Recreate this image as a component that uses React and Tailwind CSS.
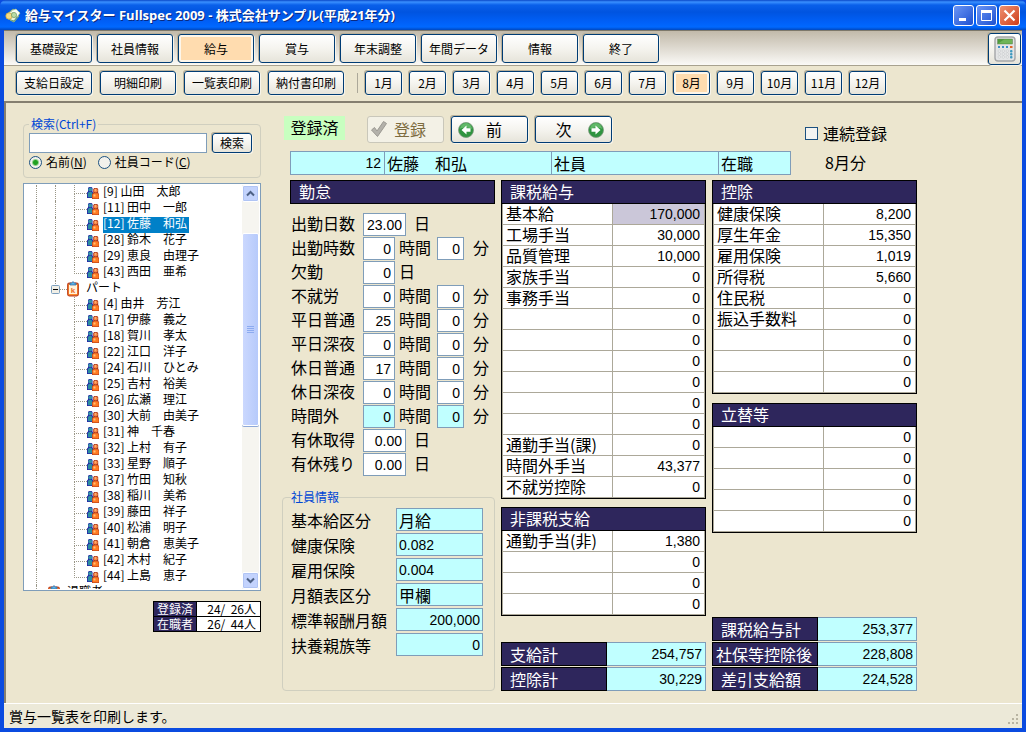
import { useState } from "react"
import clsx from "clsx"

const MENU = ["基礎設定", "社員情報", "給与", "賞与", "年末調整", "年間データ", "情報", "終了"]
const SUB_MENU = ["支給日設定", "明細印刷", "一覧表印刷", "納付書印刷"]
const MONTHS = [1, 2, 3, 4, 5, 6, 7, 8, 9, 10, 11, 12]

const SHAIN = [
  [9, "山田　太郎"],
  [11, "田中　一郎"],
  [12, "佐藤　和弘"],
  [28, "鈴木　花子"],
  [29, "恵良　由理子"],
  [43, "西田　亜希"],
]

const PART = [
  [4, "由井　芳江"],
  [17, "伊藤　義之"],
  [18, "賀川　孝太"],
  [22, "江口　洋子"],
  [24, "石川　ひとみ"],
  [25, "吉村　裕美"],
  [26, "広瀬　理江"],
  [30, "大前　由美子"],
  [31, "神　千春"],
  [32, "上村　有子"],
  [33, "星野　順子"],
  [37, "竹田　知秋"],
  [38, "稲川　美希"],
  [39, "藤田　祥子"],
  [40, "松浦　明子"],
  [41, "朝倉　恵美子"],
  [42, "木村　紀子"],
  [44, "上島　恵子"],
]

// h = 時間, m = 分, d = 日
const KINTAI = [
  { label: "出勤日数", d: "23.00", wide: true },
  { label: "出勤時数", h: "0", m: "0" },
  { label: "欠勤", d: "0" },
  { label: "不就労", h: "0", m: "0" },
  { label: "平日普通", h: "25", m: "0" },
  { label: "平日深夜", h: "0", m: "0" },
  { label: "休日普通", h: "17", m: "0" },
  { label: "休日深夜", h: "0", m: "0" },
  { label: "時間外", h: "0", m: "0", auto: true },
  { label: "有休取得", d: "0.00", wide: true },
  { label: "有休残り", d: "0.00", wide: true },
]

const KAZEI = [
  ["基本給", "170,000"],
  ["工場手当", "30,000"],
  ["品質管理", "10,000"],
  ["家族手当", "0"],
  ["事務手当", "0"],
  ["", "0"],
  ["", "0"],
  ["", "0"],
  ["", "0"],
  ["", "0"],
  ["", "0"],
  ["通勤手当(課)", "0"],
  ["時間外手当", "43,377"],
  ["不就労控除", "0"],
]

const HIKAZEI = [
  ["通勤手当(非)", "1,380"],
  ["", "0"],
  ["", "0"],
  ["", "0"],
]

const KOUJO = [
  ["健康保険", "8,200"],
  ["厚生年金", "15,350"],
  ["雇用保険", "1,019"],
  ["所得税", "5,660"],
  ["住民税", "0"],
  ["振込手数料", "0"],
  ["", "0"],
  ["", "0"],
  ["", "0"],
]

const TATEKAE = [
  ["", "0"],
  ["", "0"],
  ["", "0"],
  ["", "0"],
  ["", "0"],
]

const INFO = [
  ["基本給区分", "月給", "text"],
  ["健康保険", "0.082", "rate"],
  ["雇用保険", "0.004", "rate"],
  ["月額表区分", "甲欄", "text"],
  ["標準報酬月額", "200,000", "num"],
  ["扶養親族等", "0", "num"],
]

const NUM = "font-['Liberation_Sans',sans-serif] text-[14px]"

function AppIcon() {
  return (
    <svg className="h-4 w-4 shrink-0" viewBox="0 0 16 16">
      <path d="M1 8 8 2l7 4-6 8-6-2z" fill="#e9f3d8" stroke="#6f9a62" strokeWidth=".8" />
      <path d="m6 4 5-2 4 4-3 4z" fill="#fbfdf4" stroke="#a9c493" strokeWidth=".6" />
      <circle cx="4" cy="9" r="3.2" fill="#f6dc83" stroke="#c79f3f" strokeWidth=".7" />
      <circle cx="9" cy="8" r="2.6" fill="#b9dca6" stroke="#6f9a62" strokeWidth=".7" />
      <path d="m5 13 4 2 5-6" fill="none" stroke="#8fb57e" />
    </svg>
  )
}

function CalcIcon() {
  return (
    <svg className="h-[26px] w-[22px]" viewBox="0 0 22 26">
      <rect x="1" y="1" width="20" height="24" rx="3" fill="#e4e5e6" stroke="#a4a6a8" strokeWidth="1.4" />
      <rect x="3.5" y="3" width="15" height="5" fill="#4f9a3c" stroke="#6d8a62" strokeWidth=".5" />
      <path d="M4 7.5 10 3.5h8v4z" fill="#6fb457" />
      {[4, 8, 12].map((x) => (
        <rect key={x} x={x} y="10" width="2" height="2" fill="#3f8fc4" />
      ))}
      <rect x="16" y="10" width="2.5" height="2" fill="#e0672c" />
      {[14, 17, 20].map((y) => (
        <g key={y}>
          <rect x="4" y={y} width="2.5" height="2" rx="1" fill="#fafafa" stroke="#b5b7b9" strokeWidth=".5" />
          <rect x="8" y={y} width="2.5" height="2" rx="1" fill="#fafafa" stroke="#b5b7b9" strokeWidth=".5" />
          <rect x="12" y={y} width="2.5" height="2" rx="1" fill="#fafafa" stroke="#b5b7b9" strokeWidth=".5" />
          <rect x="16" y={y} width="2.5" height="2.5" rx="1" fill="#3f9ac0" />
        </g>
      ))}
    </svg>
  )
}

function PeopleIcon() {
  return (
    <svg className="mt-[2px] h-3 w-3 shrink-0" viewBox="0 0 12 12">
      <path d="M0 11V5.500l1-1V1l1-1h2.500l1 1v3.500L6 5.500V11z" fill="#2424a8" />
      <path d="M.8 10.200V6L2 5h2.500l1 1v4.200z" fill="#2d8fa0" />
      <circle cx="3.2" cy="2.6" r="2" fill="#3593a6" />
      <path d="M5 12V7l1.200-1V2.200l1-1.200h3l1 1.200V6l.8 1v5z" fill="#a8321c" />
      <path d="M5.500 11.500V7.500L7 6.300h3.500l1.200 1.200v4z" fill="#ff7a22" />
      <path d="M6.500 7.500h2v2h-2z" fill="#ffc07a" />
      <circle cx="8.7" cy="3.600" r="2" fill="#f58a48" />
      <path d="M8 2.500h1v1H8z" fill="#ffcfa4" />
    </svg>
  )
}

function ClipIcon() {
  return (
    <svg className="h-4 w-3 shrink-0" viewBox="0 0 12 16">
      <rect x=".7" y="2.2" width="10.6" height="12.6" rx="1.5" fill="#ff8a2a" stroke="#c0401c" strokeWidth="1.2" />
      <rect x="2" y="4" width="8" height="9" fill="#fff3dc" />
      <path d="M3 4V2h1.5L6 .6 7.5 2H9v2z" fill="#58b4e8" stroke="#2a5f9c" strokeWidth=".7" />
      <text x="6" y="11.5" textAnchor="middle" fontSize="8" fontWeight="bold" fill="#ee6a1c" fontFamily="Liberation Sans">
        k
      </text>
    </svg>
  )
}

function CheckIcon() {
  return (
    <svg className="h-[18px] w-[18px] shrink-0" viewBox="0 0 18 18">
      <path d="m1.5 10 3-2.5L7 11l6.500-9.500 3 2L7.500 16.500z" fill="#b3b1aa" stroke="#9b9992" strokeWidth="1" strokeLinejoin="round" />
    </svg>
  )
}

function ArrowIcon({ right }) {
  return (
    <svg className="h-4 w-4 shrink-0" viewBox="0 0 16 16">
      <circle cx="8" cy="8" r="7.500" fill="#2f9440" stroke="#7f9a80" strokeWidth=".8" />
      <path d="M2 7a6 6 0 0 1 12 0c-3-2-9-2-12 0z" fill="#62b869" />
      <path d={right ? "M3.500 6.300h4V3.500L12.500 8l-5 4.500V9.700h-4z" : "M12.500 6.300h-4V3.500L3.500 8l5 4.500V9.700h4z"} fill="#fff" />
    </svg>
  )
}

function ToolButton({ children, active, className, ...rest }) {
  return (
    <button
      type="button"
      className={clsx(
        "flex shrink-0 items-center justify-center rounded-[3px] border border-[#003c74] text-[12px] leading-4 whitespace-nowrap",
        active
          ? "bg-[#ffdcaf] shadow-[inset_0_0_0_2px_#fdf6ea,1px_1px_0_#f7f4ea,-1px_-1px_0_#b9b09a]"
          : "bg-linear-to-b from-white via-[#f5f4ef] to-[#e6e4da] shadow-[1px_1px_0_#f7f4ea,-1px_-1px_0_#b9b09a]",
        className
      )}
      {...rest}
    >
      {children}
    </button>
  )
}

function TitleBar() {
  const btn = "flex h-[21px] w-[21px] items-center justify-center rounded-[3px] border border-white"
  return (
    <header className="flex h-[30px] items-center gap-1 rounded-t-[6px] bg-[linear-gradient(180deg,#0a48c8_0,#3a90ff_2px,#0a60ea_5px,#0054e0_12px,#0060f8_22px,#0068ff_27px,#0048c0_30px)] pr-[6px] pl-[5px]">
      <AppIcon />
      <h1 className="flex-1 font-['Open_Sans','Noto_Sans_CJK_JP',sans-serif] text-[13px] leading-5 font-bold whitespace-nowrap text-white [text-shadow:1px_1px_0_#0a2a80]">
        給与マイスター Fullspec 2009 - 株式会社サンプル(平成21年分)
      </h1>
      <div className="flex gap-[2px]">
        <button type="button" aria-label="最小化" className={clsx(btn, "bg-linear-to-br from-[#6b95f5] to-[#1d4fd0]")}>
          <svg className="h-[13px] w-[13px]" viewBox="0 0 13 13">
            <path d="M2 9h7v3H2z" fill="#fff" />
          </svg>
        </button>
        <button type="button" aria-label="最大化" className={clsx(btn, "bg-linear-to-br from-[#6b95f5] to-[#1d4fd0]")}>
          <svg className="h-[13px] w-[13px]" viewBox="0 0 13 13">
            <path d="M1.500 2v9.500h10V2" fill="none" stroke="#fff" />
            <path d="M1 1h11v3H1z" fill="#fff" />
          </svg>
        </button>
        <button type="button" aria-label="閉じる" className={clsx(btn, "bg-linear-to-br from-[#ee9070] to-[#cc3a12]")}>
          <svg className="h-[13px] w-[13px]" viewBox="0 0 13 13">
            <path d="m1.500 1.500 10 10m0-10-10 10" stroke="#fff" strokeWidth="2.200" />
          </svg>
        </button>
      </div>
    </header>
  )
}

function Branch({ last }) {
  return (
    <span className="flex w-[13px] shrink-0 flex-col">
      <span className="h-[9px] border-b border-l border-dotted border-[#9a9788]" />
      {!last && <span className="h-[7px] border-l border-dotted border-[#9a9788]" />}
    </span>
  )
}

function Member({ no, name, last, lastGroup, selected, onSelect }) {
  return (
    <li className="flex h-4 pl-3">
      <span className="w-[19px] shrink-0 border-l border-dotted border-[#9a9788]" />
      <span className={clsx("w-[19px] shrink-0", !lastGroup && "border-l border-dotted border-[#9a9788]")} />
      <Branch last={last} />
      <PeopleIcon />
      <button
        type="button"
        onClick={onSelect}
        className={clsx("ml-1 h-4 pr-[2px] pb-1 text-[12px] leading-3 whitespace-pre", selected && "bg-[#0080c8] text-white")}
      >
        {`[${no}] ${name}`}
      </button>
    </li>
  )
}

function ScrollBar() {
  const btn = "flex h-[17px] items-center justify-center rounded-[2px] border border-white bg-[#c3d3fd] shadow-[inset_0_0_0_1px_#b0c4f4]"
  return (
    <div className="flex w-[17px] shrink-0 flex-col bg-[#f6f5f0]">
      <button type="button" aria-label="上へ" className={btn}>
        <svg className="h-[9px] w-[9px]" viewBox="0 0 9 9">
          <path d="m1 6.500 3.500-3.500L8 6.500" fill="none" stroke="#4d6185" strokeWidth="2" />
        </svg>
      </button>
      <div className="mt-[31px] flex h-[193px] items-center justify-center rounded-[2px] border border-white bg-linear-to-r from-[#cbd8fe] to-[#b6cafb] shadow-[0_1px_0_#8fa9d8]">
        <svg className="h-2 w-[7px]" viewBox="0 0 7 8">
          <path d="M0 .5h7M0 2.500h7M0 4.500h7M0 6.500h7" stroke="#8cabf0" />
        </svg>
      </div>
      <button type="button" aria-label="下へ" className={clsx(btn, "mt-auto")}>
        <svg className="h-[9px] w-[9px]" viewBox="0 0 9 9">
          <path d="m1 2.500 3.500 3.500L8 2.500" fill="none" stroke="#4d6185" strokeWidth="2" />
        </svg>
      </button>
    </div>
  )
}

function EmployeePanel() {
  const [selected, setSelected] = useState(12)
  const radio =
    "h-[13px] w-[13px] appearance-none rounded-full border border-[#1c5180] bg-[#f2f1ec] checked:bg-[radial-gradient(circle,#21a121_0_2px,#8fd08f_3px,#f2f1ec_4px)]"
  return (
    <aside className="w-[238px] shrink-0">
      <fieldset className="h-[62px] rounded-[4px] border border-[#d0cfbf] pt-px pl-[5px]">
        <legend className="px-[2px] text-[12px] leading-4 text-[#0046d5]">検索(Ctrl+F)</legend>
        <div className="flex gap-[5px]">
          <input aria-label="検索" className="h-5 w-[178px] border border-[#7f9db9] bg-white px-1 text-[12px]" />
          <ToolButton className="h-5 w-10">検索</ToolButton>
        </div>
        <div className="mt-px flex gap-[11px] text-[12px] leading-4">
          <label className="flex items-center gap-1">
            <input type="radio" name="kind" defaultChecked className={radio} />
            <span>
              名前(<u>N</u>)
            </span>
          </label>
          <label className="flex items-center gap-1">
            <input type="radio" name="kind" className={radio} />
            <span>
              社員コード(<u>C</u>)
            </span>
          </label>
        </div>
      </fieldset>

      <div className="mt-[5px] flex h-[408px] border border-[#7f9db9] bg-white p-px pl-0">
        <ul className="h-full flex-1 overflow-hidden">
          {SHAIN.map(([no, name], i) => (
            <Member
              key={no}
              no={no}
              name={name}
              last={i === SHAIN.length - 1}
              selected={selected === no}
              onSelect={() => setSelected(no)}
            />
          ))}
          <li className="flex h-4 pl-3">
            <span className="w-[15px] shrink-0 border-l border-dotted border-[#9a9788]" />
            <svg className="h-4 w-[9px] shrink-0" viewBox="0 0 9 16">
              <path d="M4.500 0v4" stroke="#9a9788" strokeDasharray="1 1" />
              <rect x=".5" y="4.500" width="8" height="8" rx="1" fill="#f1efe6" stroke="#7b9ebd" />
              <path d="M2 8.500h5" stroke="#000" />
            </svg>
            <span className="h-[9px] w-[7px] shrink-0 border-b border-dotted border-[#9a9788]" />
            <ClipIcon />
            <span className="ml-[7px] text-[12px] leading-3">パート</span>
          </li>
          {PART.map(([no, name], i) => (
            <Member
              key={no}
              no={no}
              name={name}
              last={i === PART.length - 1}
              lastGroup
              selected={selected === no}
              onSelect={() => setSelected(no)}
            />
          ))}
          <li className="flex h-4 pl-3">
            <span className="w-3 shrink-0 border-l border-dotted border-[#9a9788]" />
            <ClipIcon />
            <span className="ml-[7px] text-[12px] leading-3">退職者</span>
          </li>
        </ul>
        <ScrollBar />
      </div>

      <table className="mt-[10px] ml-auto border-collapse text-[12px] leading-[14px]">
        <tbody>
          <tr className="h-[15px]">
            <th className="w-[43px] border border-black bg-[#2e265c] p-0 font-normal text-white">登録済</th>
            <td className="w-16 border border-black bg-white p-0 pr-1 text-right whitespace-pre">24/  26人</td>
          </tr>
          <tr className="h-[15px]">
            <th className="border border-black bg-[#2e265c] p-0 font-normal text-white">在職者</th>
            <td className="border border-black bg-white p-0 pr-1 text-right whitespace-pre">26/  44人</td>
          </tr>
        </tbody>
      </table>
    </aside>
  )
}

function KintaiRow({ row }) {
  const box = clsx("h-[23px] border border-[#7f9db9] px-[3px] text-right", NUM, row.auto ? "bg-[#c0ffff]" : "bg-white")
  return (
    <div className="flex items-start">
      <label htmlFor={row.label} className="w-[72px]">
        {row.label}
      </label>
      <input id={row.label} className={clsx(box, row.wide ? "w-[43px]" : "w-8")} defaultValue={row.h ?? row.d} />
      {row.h ? (
        <>
          <span className="ml-1">時間</span>
          <input aria-label={`${row.label} 分`} className={clsx(box, "ml-[6px] w-[27px]")} defaultValue={row.m} />
          <span className="ml-[9px]">分</span>
        </>
      ) : (
        <span className={row.wide ? "ml-2" : "ml-1"}>日</span>
      )}
    </div>
  )
}

function AmountTable({ title, rows, highlight }) {
  return (
    <div className="border border-black">
      <table className="w-full border-separate border-spacing-0 bg-white">
        <thead>
          <tr className="h-[23px]">
            <th
              colSpan={2}
              className="border-b border-black bg-[#2e265c] p-0 pl-2 text-left align-top leading-5 font-normal text-white"
            >
              {title}
            </th>
          </tr>
        </thead>
        <tbody>
          {rows.map(([label, value], i) => (
            <tr key={i} className="h-[21px]">
              <td className="w-[111px] border-x border-b border-[#aca899] p-0 pl-[3px] align-top leading-[18px] whitespace-nowrap">
                {label}
              </td>
              <td
                className={clsx("border-r border-b border-[#aca899] p-0 pr-1 text-right", NUM, i === highlight && "bg-[#cbc7d9]")}
              >
                {value}
              </td>
            </tr>
          ))}
        </tbody>
      </table>
    </div>
  )
}

function Total({ label, value, tight }) {
  return (
    <div className="flex h-6">
      <label
        htmlFor={label}
        className={clsx(
          "flex w-[106px] items-center border border-black bg-[#2e265c] whitespace-nowrap text-white",
          tight ? "pl-[3px]" : "pl-2"
        )}
      >
        {label}
      </label>
      <input
        id={label}
        readOnly
        value={value}
        className={clsx("w-0 flex-1 border border-l-0 border-[#7f9db9] bg-[#c0ffff] pr-[3px] text-right", NUM)}
      />
    </div>
  )
}

function PayForm() {
  const cell = "border border-l-0 border-[#7f9db9] bg-[#c0ffff] px-[2px]"
  return (
    <section className="w-[635px] shrink-0 text-[16px] leading-5">
      <div className="flex">
        <div className="w-[509px]">
          <div className="flex h-[27px] items-start gap-[7px] pl-[2px]">
            <span className="mr-[15px] h-6 w-[61px] bg-[#c8ffc0] text-center leading-[22px]">登録済</span>
            <button
              type="button"
              disabled
              className="flex h-[27px] w-[77px] items-center gap-[6px] rounded-[3px] border border-[#c9c7ba] bg-[#f3f1e6] pb-[2px] pl-[2px] text-[#7d6c40]"
            >
              <CheckIcon />
              登録
            </button>
            <ToolButton className="h-[27px] w-[77px] gap-3 pr-[19px]">
              <ArrowIcon />
              <span className="pb-[2px] text-[16px]">前</span>
            </ToolButton>
            <ToolButton className="h-[27px] w-[77px] gap-4 pl-3">
              <span className="pb-[2px] text-[16px]">次</span>
              <ArrowIcon right />
            </ToolButton>
          </div>
          <div className="mt-2 flex h-6 pl-2">
            <input aria-label="社員コード" readOnly value="12" className={clsx("w-[95px] border border-[#7f9db9] bg-[#c0ffff] px-[3px] text-right", NUM)} />
            <input aria-label="氏名" readOnly value="佐藤　和弘" className={clsx(cell, "w-[167px]")} />
            <input aria-label="区分" readOnly value="社員" className={clsx(cell, "w-[167px]")} />
            <input aria-label="在職区分" readOnly value="在職" className={clsx(cell, "w-0 flex-1")} />
          </div>
        </div>
        <div className="flex flex-col gap-[9px] pt-[7px] pl-[14px]">
          <label className="flex items-center gap-[5px] whitespace-nowrap">
            <input type="checkbox" className="h-[13px] w-[13px] appearance-none border border-[#1c5180] bg-[#f4f4f1] checked:bg-[#21a121]" />
            連続登録
          </label>
          <span className="pl-5">8月分</span>
        </div>
      </div>

      <div className="mt-[5px] flex gap-[6px]">
        <div className="flex w-[213px] shrink-0 flex-col">
          <h2 className="ml-2 h-6 border border-black bg-[#2e265c] pl-2 text-white">勤怠</h2>
          <div className="mt-[9px] flex flex-col gap-px pl-[9px]">
            {KINTAI.map((row) => (
              <KintaiRow key={row.label} row={row} />
            ))}
          </div>
          <fieldset className="mt-[13px] flex-1 rounded-[4px] border border-[#d0cfbf] pl-2">
            <legend className="text-[12px] leading-4 text-[#0046d5]">社員情報</legend>
            <div className="mt-[3px] flex flex-col gap-[2px]">
              {INFO.map(([label, value, kind]) => (
                <div key={label} className="flex items-center">
                  <label htmlFor={`info-${label}`} className="w-[105px] whitespace-nowrap">
                    {label}
                  </label>
                  <input
                    id={`info-${label}`}
                    readOnly
                    value={value}
                    className={clsx(
                      "h-[23px] w-[87px] border border-[#7f9db9] bg-[#c0ffff] px-[2px]",
                      kind !== "text" && NUM,
                      kind === "num" && "text-right"
                    )}
                  />
                </div>
              ))}
            </div>
          </fieldset>
        </div>

        <div className="flex flex-1 flex-col gap-2">
          <AmountTable title="課税給与" rows={KAZEI} highlight={0} />
          <AmountTable title="非課税支給" rows={HIKAZEI} />
          <div className="mt-auto flex flex-col gap-px pt-[18px]">
            <Total label="支給計" value="254,757" />
            <Total label="控除計" value="30,229" />
          </div>
        </div>

        <div className="flex flex-1 flex-col gap-[9px]">
          <AmountTable title="控除" rows={KOUJO} />
          <AmountTable title="立替等" rows={TATEKAE} />
          <div className="mt-auto flex flex-col gap-px">
            <Total label="課税給与計" value="253,377" />
            <Total label="社保等控除後" value="228,808" tight />
            <Total label="差引支給額" value="224,528" />
          </div>
        </div>
      </div>
    </section>
  )
}

export default function App() {
  const [menu, setMenu] = useState("給与")
  const [month, setMonth] = useState(8)

  return (
    <div className="flex min-h-screen flex-col bg-[#0a4be0] font-['Noto_Sans_CJK_JP',sans-serif] text-black">
      <TitleBar />
      <div className="mx-1 mb-1 flex flex-1 flex-col bg-[#ece6cf]">
        <nav className="flex h-9 items-center gap-[5px] border-t border-b border-t-[#7d786a] border-b-[#a8a28f] bg-linear-to-b from-[#c2baaa] to-[#fbfaf7] pt-px pr-px pl-3">
          {MENU.map((item) => (
            <ToolButton key={item} active={item === menu} onClick={() => setMenu(item)} className="h-[29px] w-[76px]">
              {item}
            </ToolButton>
          ))}
          <ToolButton aria-label="電卓" className="ml-auto h-8 w-[33px]">
            <CalcIcon />
          </ToolButton>
        </nav>
        <nav className="flex h-[35px] items-center gap-[7px] pb-[2px] pl-3">
          <div className="flex gap-2">
            {SUB_MENU.map((item) => (
              <ToolButton key={item} className="h-6 w-[76px]">
                {item}
              </ToolButton>
            ))}
          </div>
          <span className="ml-[6px] h-5 w-px bg-[#aca899]" />
          {MONTHS.map((m) => (
            <ToolButton key={m} active={m === month} onClick={() => setMonth(m)} className="h-6 w-[37px]">
              {m}月
            </ToolButton>
          ))}
        </nav>
        <main className="flex flex-1 gap-[21px] border-t-2 border-l-2 border-[#857f70] pt-[13px] pb-3 pl-[17px]">
          <EmployeePanel />
          <PayForm />
        </main>
        <footer className="flex h-[25px] items-center justify-between border-t border-white bg-[#ece9d8] pr-[2px] pl-[5px] text-[14px] leading-5">
          <span>賞与一覧表を印刷します。</span>
          <svg className="mt-2 h-3 w-3" viewBox="0 0 12 12">
            <path d="M8 0h2v2H8zM4 4h2v2H4zM8 4h2v2H8zM0 8h2v2H0zM4 8h2v2H4zM8 8h2v2H8z" fill="#b8b4a2" />
          </svg>
        </footer>
      </div>
    </div>
  )
}
